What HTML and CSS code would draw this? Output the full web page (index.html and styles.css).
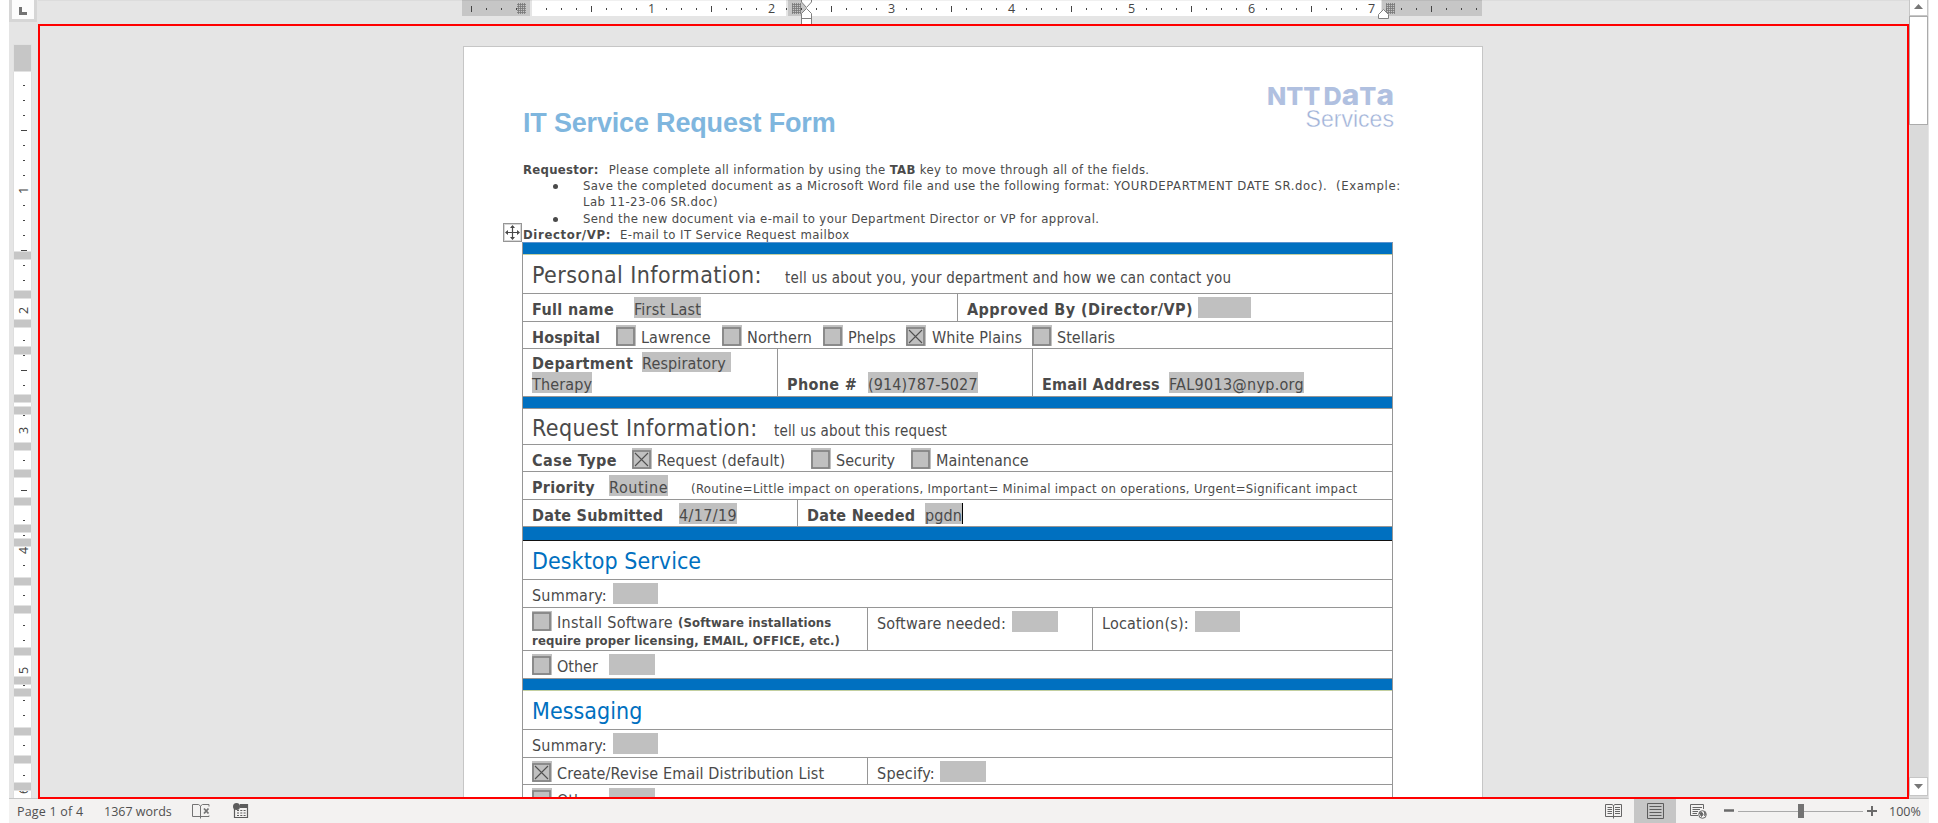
FILE: index.html
```html
<!DOCTYPE html>
<html lang="en">
<head>
<meta charset="utf-8">
<title>IT Service Request Form</title>
<link rel="stylesheet" href="styles.css">
</head>
<body>
<svg class="defs" width="0" height="0">
  <symbol id="box" viewBox="0 0 19 19"><rect x="1" y="1" width="17" height="17" fill="#c0c0c0" stroke="#828282" stroke-width="1.7"/></symbol>
  <symbol id="box-x" viewBox="0 0 19 19"><rect x="1" y="1" width="17" height="17" fill="#c0c0c0" stroke="#828282" stroke-width="1.7"/><path d="M3 3L16 16M16 3L3 16" stroke="#505050" stroke-width="1.1"/></symbol>
  <pattern id="hatch" width="2" height="2" patternUnits="userSpaceOnUse"><path d="M0 .5H2M.5 0V2" stroke="#777" stroke-width=".8"/></pattern>
</svg>
<div class="app">
  <div class="workspace">
    <div class="left">
      <div class="tab-selector"><svg width="22" height="19" viewBox="0 0 22 19"><path d="M8.500 7V13.500H15" fill="none" stroke="#737373" stroke-width="3"/></svg></div>
      <svg class="vruler" width="29" height="775" viewBox="9 24 29 775">
        <rect x="13" y="44" width="19" height="755" fill="#dedede"/>
        <rect x="14" y="45" width="17" height="753" fill="#fff"/>
        <path d="M24 85V799" stroke="#444" stroke-width="2" stroke-dasharray="1 14 1 14 1 14 1 14 1 14 1 14 1 29"/>
        <path d="M24 130V799" stroke="#444" stroke-width="6" stroke-dasharray="1 119"/>
        <g class="ruler-text">
          <text transform="translate(28 190.500) rotate(-90)">1</text>
          <text transform="translate(28 310.500) rotate(-90)">2</text>
          <text transform="translate(28 430.500) rotate(-90)">3</text>
          <text transform="translate(28 550.500) rotate(-90)">4</text>
          <text transform="translate(28 670.500) rotate(-90)">5</text>
          <text transform="translate(28 790.500) rotate(-90)">6</text>
        </g>
        <g fill="#c6c6c6" stroke="#e2e2e2">
          <rect x="13.500" y="44.500" width="18" height="27"/>
          <rect x="13.500" y="251.500" width="18" height="8"/><rect x="13.500" y="290.500" width="18" height="8"/>
          <rect x="13.500" y="319.500" width="18" height="8"/><rect x="13.500" y="346.500" width="18" height="8"/>
          <rect x="13.500" y="394.500" width="18" height="8"/><rect x="13.500" y="406.500" width="18" height="8"/>
          <rect x="13.500" y="442.500" width="18" height="8"/><rect x="13.500" y="469.500" width="18" height="8"/>
          <rect x="13.500" y="497.500" width="18" height="8"/><rect x="13.500" y="524.500" width="18" height="8"/>
          <rect x="13.500" y="538.500" width="18" height="8"/><rect x="13.500" y="577.500" width="18" height="8"/>
          <rect x="13.500" y="605.500" width="18" height="8"/><rect x="13.500" y="647.500" width="18" height="8"/>
          <rect x="13.500" y="676.500" width="18" height="8"/><rect x="13.500" y="688.500" width="18" height="8"/>
          <rect x="13.500" y="727.500" width="18" height="8"/><rect x="13.500" y="755.500" width="18" height="8"/>
          <rect x="13.500" y="782.500" width="18" height="8"/>
        </g>
        <path d="M9 798.500H38" stroke="#c6c6c6"/>
      </svg>
    </div>
    <div class="center">
      <svg class="hruler" width="1020" height="24" viewBox="462 0 1020 24">
        <rect x="462" y="0" width="1020" height="16" fill="#fff"/>
        <path d="M462 0H531V16H462ZM788 0H806V16H788ZM1382 0H1482V16H1382Z" fill="#c6c6c6"/>
        <path d="M530 0h2v16h-2zM786 0h2v16h-2zM1381 0h1v16h-1z" fill="#e5e5e5"/>
        <path d="M426 9H1482" stroke="#444" stroke-width="2" stroke-dasharray="1 14 1 14 1 14 1 14 1 14 1 14 1 29"/>
        <path d="M471 9H1482" stroke="#444" stroke-width="6" stroke-dasharray="1 119"/>
        <g class="ruler-text">
          <text x="651.500" y="13">1</text><text x="771.500" y="13">2</text><text x="891.500" y="13">3</text>
          <text x="1011.500" y="13">4</text><text x="1131.500" y="13">5</text><text x="1251.500" y="13">6</text><text x="1371.500" y="13">7</text>
        </g>
        <path d="M517 3h9v11h-9zM792 3h9v11h-9zM1386 3h9v11h-9z" fill="url(#hatch)"/>
        <path d="M801.500 0V2L806.500 7.500L811.500 2V0" fill="#fff" stroke="#808080"/>
        <path d="M801.500 24V13.500L806.500 8.500L811.500 13.500V24M801.500 18.500H811.500" fill="#fff" stroke="#808080"/>
        <path d="M1378.500 18.500V14.500L1383.500 9.500L1388.500 14.500V18.500H1378.500Z" fill="#fff" stroke="#808080"/>
        <rect x="462" y="0" width="1020" height="1" fill="#000" opacity=".06"/>
      </svg>
      <div class="viewport">
        <div class="page">
          <div class="doc-head">
            <h1>IT Service Request Form</h1>
            <svg class="logo" width="132" height="56" viewBox="1265 81 132 56">
              <text x="1267" y="104.500" font-size="24.500" font-weight="800" textLength="127" lengthAdjust="spacingAndGlyphs">NTT<tspan dx="3">D</tspan><tspan font-size="29">a</tspan>T<tspan font-size="29">a</tspan></text>
              <text class="services" x="1305.500" y="127" font-size="24.500" textLength="88.500" lengthAdjust="spacingAndGlyphs">Services</text>
            </svg>
          </div>
          <div class="intro">
            <p><b class="s5">Requestor</b><b>:</b><span class="i609">Please complete all information by using the <b>TAB</b> key to move through all of the fields.</span></p>
            <ul>
              <li>Save the completed document as a Microsoft Word file and use the following format: <span class="s6">YOURDEPARTMENT DATE SR.doc).&nbsp; (Example:</span><br><span class="s45">Lab 11-23-06 SR.doc)</span></li>
              <li>Send the new document via e-mail to your Department Director or VP for approval.</li>
            </ul>
            <p class="last"><b class="s65">Director/VP:</b><span class="i621">E-mail to IT Service Request mailbox</span></p>
            <svg class="move" width="19" height="19" viewBox="0 0 19 19"><rect x=".5" y=".5" width="18" height="18" fill="#fff" stroke="#969696"/><rect x="1.500" y="1.500" width="16" height="16" fill="none" stroke="#d8d8d8"/><path d="M9.500 3V16M3 9.500H16" stroke="#4a4a4a" stroke-width="1.200"/><path d="M9.500 2L12 5H7ZM9.500 17L7 14H12ZM2 9.500L5 7V12ZM17 9.500L14 7V12Z" fill="#4a4a4a"/></svg>
          </div>
          <div class="form">
            <div class="row band olive"></div>
            <div class="row h39 title c253"><span class="heading">Personal Information:</span><span class="sub">tell us about you, your department and how we can contact you</span></div>
            <div class="row h28">
              <div class="cell w435 name"><b class="s35">Full name</b><span class="field s25">First Last</span></div>
              <div class="cell approve"><b class="s41">Approved By (Director/VP)</b><i class="field w53"></i></div>
            </div>
            <div class="row h27">
              <div class="cell hospital"><b class="s1">Hospital</b><i class="cb"><svg><use href="#box"/></svg></i><span class="s1">Lawrence</span><i class="cb"><svg><use href="#box"/></svg></i><span>Northern</span><i class="cb"><svg><use href="#box"/></svg></i><span class="s1">Phelps</span><i class="cb"><svg><use href="#box-x"/></svg></i><span>White Plains</span><i class="cb"><svg><use href="#box"/></svg></i><span class="s0">Stellaris</span></div>
            </div>
            <div class="row h48">
              <div class="cell w255 dept"><b class="s35 short">Department</b><span class="field short w89">Respiratory</span><span class="field">Therapy</span></div>
              <div class="cell w255 low phone"><b class="s35">Phone #</b><span class="field">(914)787-5027</span></div>
              <div class="cell low email"><b class="s2">Email Address</b><span class="field s3">FAL9013@nyp.org</span></div>
            </div>
            <div class="row band"></div>
            <div class="row h36 title c242"><span class="heading">Request Information:</span><span class="sub s17">tell us about this request</span></div>
            <div class="row h27">
              <div class="cell case"><b class="s45">Case Type</b><i class="cb"><svg><use href="#box-x"/></svg></i><span class="s2">Request (default)</span><i class="cb"><svg><use href="#box"/></svg></i><span class="s0">Security</span><i class="cb"><svg><use href="#box"/></svg></i><span class="s0">Maintenance</span></div>
            </div>
            <div class="row h28">
              <div class="cell priority"><b>Priority</b><span class="field s6">Routine</span><span class="note">(Routine=Little impact on operations, Important= Minimal impact on operations, Urgent=Significant impact</span></div>
            </div>
            <div class="row h27">
              <div class="cell w275 submitted"><b class="s25">Date Submitted</b><span class="field s35">4/17/19</span></div>
              <div class="cell needed"><b>Date Needed</b><span class="field caret">pgdn</span></div>
            </div>
            <div class="row band tall"></div>
            <div class="row h39 title"><span class="heading blue">Desktop Service</span></div>
            <div class="row h28"><div class="cell summary"><span class="s2">Summary:</span><i class="field w45"></i></div></div>
            <div class="row h43">
              <div class="cell w345 install"><i class="cb short"><svg><use href="#box"/></svg></i><span class="short s3">Install Software</span><b class="fine short">(Software installations</b><b class="fine wide">require proper licensing, EMAIL, OFFICE, etc.)</b></div>
              <div class="cell w225 software"><span>Software needed:</span><i class="field w46"></i></div>
              <div class="cell location"><span class="s2">Location(s):</span><i class="field w45"></i></div>
            </div>
            <div class="row h28"><div class="cell other"><i class="cb"><svg><use href="#box"/></svg></i><span class="s0">Other</span><i class="field w46"></i></div></div>
            <div class="row band olive"></div>
            <div class="row h39 title"><span class="heading blue">Messaging</span></div>
            <div class="row h28"><div class="cell summary"><span class="s2">Summary:</span><i class="field w45"></i></div></div>
            <div class="row h27">
              <div class="cell w345 create"><i class="cb"><svg><use href="#box-x"/></svg></i><span>Create/Revise Email Distribution List</span></div>
              <div class="cell specify"><span class="s25">Specify:</span><i class="field w46"></i></div>
            </div>
            <div class="row h28"><div class="cell other"><i class="cb"><svg><use href="#box"/></svg></i><span class="s0">Other</span><i class="field w46"></i></div></div>
          </div>
        </div>
      </div>
    </div>
    <div class="scrollbar">
      <div class="up"><svg width="9" height="5"><path d="M0 5L4.500 0L9 5Z" fill="#777"/></svg></div>
      <div class="thumb"></div>
      <div class="down"><svg width="9" height="5"><path d="M0 0L4.500 5L9 0Z" fill="#777"/></svg></div>
    </div>
  </div>
  <div class="status">
    <span class="pages">Page 1 of 4</span><span class="words">1367 words</span>
    <svg class="proof" width="18" height="16" viewBox="0 0 18 16" fill="none" stroke="#737373"><path d="M8.500 13.500H.5V1.500H6.500L8.500 3L10.500 1.500H17M8.500 3V15.500M8.500 13.500H17V12.500M17 1.500V3.500"/><path d="M12 5.500L16.500 10.500M16.500 5.500L12 10.500" stroke-width="1.800"/></svg>
    <svg class="macro" width="16" height="16" viewBox="0 0 16 16"><path d="M1.500 6V14.500H14.500V1.500H7" fill="none" stroke="#5c5c5c" stroke-width="1.200"/><circle cx="3.500" cy="3.500" r="3.500" fill="#5c5c5c"/><path d="M7 1H15V5H7Z" fill="#5c5c5c"/><path d="M4 7.500H13M4 10H13M4 12.500H13" stroke="#5c5c5c" stroke-dasharray="2 1.300"/></svg>
    <svg class="read" width="17" height="16" viewBox="0 0 17 16" fill="none" stroke="#666"><path d="M.5 1.500H7L8.500 2.500L10 1.500H16.500V13.500H.5ZM8.500 2.500V15.500"/><path d="M2.500 4.500H7M2.500 6.500H7M2.500 8.500H7M2.500 10.500H7M10 4.500H15M10 6.500H15M10 8.500H15M10 10.500H15"/></svg>
    <span class="active"><svg width="17" height="16" viewBox="0 0 17 16" fill="none" stroke="#5c5c5c"><path d="M.5.5H16.500V15.500H.5Z" /><path d="M2.500 3.500H14.500M2.500 6.500H14.500M2.500 9.500H14.500M2.500 12.500H14.500"/></svg></span>
    <svg class="web" width="17" height="16" viewBox="0 0 17 16" fill="none" stroke="#666"><path d="M8 12.500H.5V1.500H13.500V6M2.500 4.500H12M2.500 6.500H10M2.500 8.500H8M2.500 10.500H7"/><circle cx="12.500" cy="11.500" r="3.800"/><path d="M9.500 10L12 9.500L13 11.500L11.500 13.500ZM14 8.500L15.500 11L14.500 13" fill="#666"/></svg>
    <svg class="zoom" width="154" height="16" viewBox="0 0 154 16" stroke="#6a6a6a"><path d="M0 7.500H10" stroke-width="2.500"/><path d="M14 8.500H139" stroke="#aaa"/><path d="M74 1H80V15H74Z" fill="#737373" stroke="none"/><path d="M143 8H153M148 3V13" stroke-width="2"/></svg>
    <span class="pct">100%</span>
  </div>
</div>
</body>
</html>
```
FILE: styles.css
```css
* { box-sizing: border-box; }
body { margin: 0; background: #fff; overflow: hidden; }
svg { display: block; }
.defs { position: absolute; }
.app { width: 1920px; height: 823px; margin-left: 9px; background: #e5e5e5; display: flex; flex-direction: column; }
.workspace { display: grid; grid-template-columns: 29px 1871px 20px; height: 799px; }
.left { display: flex; flex-direction: column; }
.tab-selector { width: 28px; height: 22px; margin-bottom: 2px; border: solid #d6d6d6; border-width: 0 3px 3px; background: #fcfcfc; }
.vruler, .hruler { flex: none; }
.ruler-text { font: 12.5px "Open Sans", "Noto Sans", sans-serif; fill: #444; text-anchor: middle; }
.center { display: flex; flex-direction: column; box-shadow: inset 0 1px #dcdcdc; }
.hruler { margin-left: 424px; }
.viewport { height: 775px; border: 2px solid #f00; overflow: hidden; padding: 20px 0 0 423px; }

.page { width: 1020px; height: 900px; padding-left: 58px; border: 1px solid #c6c6c6; background: #fff; color: #4a4a4a; font-family: "DejaVu Sans Condensed", "DejaVu Sans", sans-serif; }
.doc-head { display: flex; justify-content: space-between; height: 115px; padding: 34px 85px 0 1px; }
h1 { margin: 27px 0 0; font: bold 27px/30px "Liberation Sans", sans-serif; letter-spacing: -.18px; color: #7fb6de; }
.logo { font-family: Inter, sans-serif; fill: #b0c0e0; overflow: visible; }
.services { font-family: "Liberation Sans", sans-serif; stroke: #fff; stroke-width: .4px; fill: #9fb2d8; }
.intro { position: relative; height: 80px; padding-left: 1px; font-size: 13px; line-height: 16px; letter-spacing: .36px; white-space: nowrap; }
.intro p { display: flex; margin: 0; }
.i609 { margin-left: 10px; }
.i621 { margin-left: 9px; letter-spacing: .42px; }
.intro ul { margin: 0; padding: 0 0 0 60px; list-style: none; }
.intro li { letter-spacing: .36px; }
.intro li:first-child { letter-spacing: .375px; }
.intro li::before { content: ""; float: left; width: 5px; height: 5px; margin: 6px 0 0 -30px; border-radius: 50%; background: #4a4a4a; }
.intro li + li { padding-top: 1px; }
.intro .last { line-height: 15px; }
.move { position: absolute; left: -19px; top: 61px; }

.form { width: 871px; border: 1px solid #969696; border-top-color: #5a93cf; }
.row { display: flex; border-bottom: 1px solid #969696; }
.band { height: 12px; background: #0070c0; }
.band.olive { border-bottom-color: #c3cfa0; }
.band.tall { height: 14px; border-bottom-color: #111; }
.h27 { height: 27px; }
.h28 { height: 28px; }
.h36 { height: 36px; }
.h39 { height: 39px; }
.h43 { height: 43px; }
.h48 { height: 48px; }
.title { display: grid; align-items: baseline; align-content: start; padding: 7px 0 0 9px; white-space: nowrap; }
.h36.title { padding-top: 6px; }
.c253 { grid-template-columns: 253px 1fr; }
.c242 { grid-template-columns: 242px 1fr; }
.heading { font-size: 23px; line-height: 27px; letter-spacing: .42px; }
.heading.blue { color: #0070c0; letter-spacing: .05px; }
.sub { font-size: 15px; letter-spacing: .2px; }
.cell { display: grid; align-content: start; justify-items: start; padding: 3px 0 0 9px; border-left: 1px solid #969696; font-size: 16px; line-height: 25px; letter-spacing: .13px; white-space: nowrap; }
.cell:first-child { border-left: 0; }
.cell > * { height: 21px; }
.cell > b { letter-spacing: .27px; }
.cell > .short { height: 20px; line-height: 23px; }
.low { padding-top: 23px; }
.field { background: #c0c0c0; }
.cb { width: 20px; background: #c0c0c0; padding-top: 2px; }
.cb svg { width: 19px; height: 19px; }
.cb.short { padding-top: 1px; }
.caret { border-right: 1px solid #000; }

.w435 { width: 434px; }
.w255 { width: 255px; }
.w275 { width: 274px; }
.w345 { width: 344px; }
.w225 { width: 225px; }
.w255.dept { width: 254px; }
.w45 { width: 45px; }
.w46 { width: 46px; }
.w53 { width: 53px; }
.w89 { width: 89px; }

.name { grid-template-columns: 102px 1fr; }
.approve { grid-template-columns: 231px 1fr; }
.hospital { grid-template-columns: 84px 25px 81px 25px 76px 25px 58px 26px 100px 25px 1fr; }
.dept { grid-template-columns: 110px 1fr; }
.phone { grid-template-columns: 81px 1fr; }
.email { grid-template-columns: 127px 1fr; }
.case { grid-template-columns: 100px 25px 154px 25px 75px 25px 1fr; }
.priority { grid-template-columns: 77px 82px 1fr; }
.submitted { grid-template-columns: 147px 1fr; }
.needed { grid-template-columns: 118px 1fr; }
.summary { grid-template-columns: 81px 1fr; }
.install { grid-template-columns: 25px 121px 1fr; }
.software { grid-template-columns: 135px 1fr; }
.location { grid-template-columns: 93px 1fr; }
.other { grid-template-columns: 25px 52px 1fr; }
.create { grid-template-columns: 25px 1fr; }
.specify { grid-template-columns: 63px 1fr; }
.note { font-size: 13px; line-height: 27px; letter-spacing: .33px; }
.cell > .fine { font-size: 13px; line-height: 24px; letter-spacing: .12px; }
.cell > .wide { grid-column: 1 / 4; line-height: 19px; }

.page .s0 { letter-spacing: 0; }
.page .s1 { letter-spacing: .1px; }
.page .s17 { letter-spacing: .17px; }
.page .s2 { letter-spacing: .2px; }
.page .s25 { letter-spacing: .24px; }
.page .s3 { letter-spacing: .29px; }
.page .s35 { letter-spacing: .35px; }
.page .s41 { letter-spacing: .45px; }
.page .s45 { letter-spacing: .45px; }
.page .s5 { letter-spacing: .3px; }
.page .s6 { letter-spacing: .61px; }
.page .s65 { letter-spacing: .64px; }

.scrollbar { display: flex; flex-direction: column; background: #dadada; border-right: 1px solid #e5e5e5; border-bottom: 1px solid #c6c6c6; }
.up, .down { display: flex; justify-content: center; align-items: center; background: #fff; border: 1px solid #c6c6c6; }
.up { height: 16px; border-top: 0; padding-bottom: 3px; }
.thumb { height: 109px; background: #fff; border: 1px solid #ababab; }
.down { height: 19px; margin: auto 0 2px; }

.status { display: flex; align-items: center; height: 24px; background: #f3f2f1; color: #505050; font: 12.5px/24px "Open Sans", "Noto Sans", sans-serif; white-space: nowrap; }
.status > * { flex: none; }
.status > span:not(.active) { padding-top: 2px; }
.pages { width: 88px; margin-left: 8px; letter-spacing: .2px; }
.words { width: 87px; margin-left: -1px; margin-right: 1px; }
.proof { width: 18px; }
.macro { margin-left: 23px; }
.read { margin-left: 1356px; }
.active { display: flex; justify-content: center; align-items: center; width: 42px; height: 24px; margin-left: 12px; margin-right: 1px; background: #c6c6c6; }
.web { margin-left: 13px; }
.zoom { margin-left: 17px; }
.pct { margin-left: 11px; }
```
